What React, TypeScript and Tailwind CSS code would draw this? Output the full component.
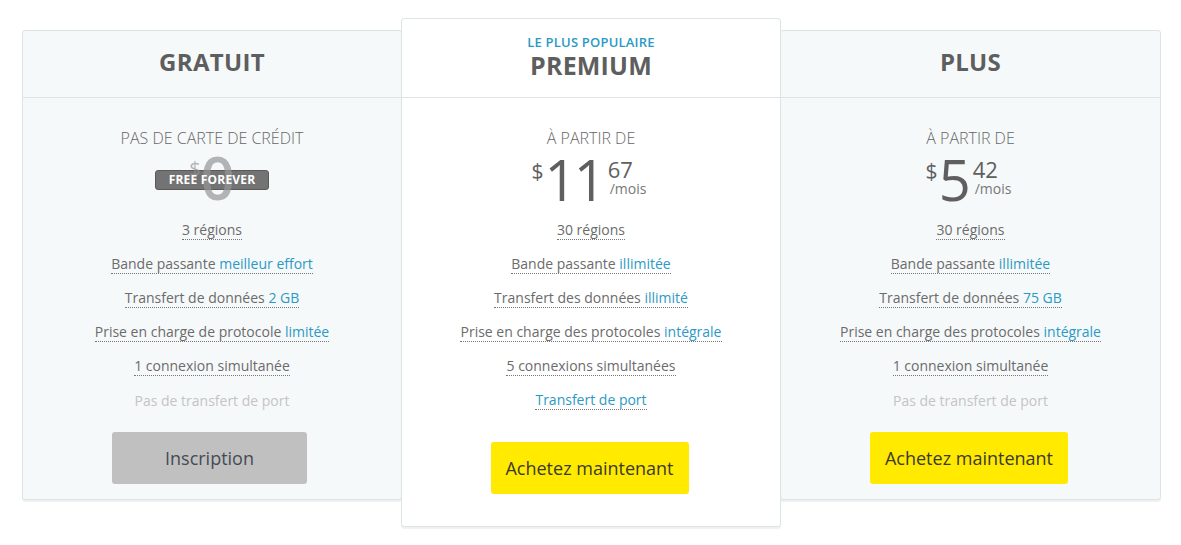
import React from "react";

type Feature = { text: string; hi?: string; muted?: boolean; allBlue?: boolean };

const BLUE = "text-[#2a9ac4]";

function FeatureRow({ f }: { f: Feature }) {
  if (f.muted) {
    return (
      <div className="h-[34px] flex items-center justify-center">
        <span className="text-[14px] text-[#c4c4c4]">{f.text}</span>
      </div>
    );
  }
  return (
    <div className="h-[34px] flex items-center justify-center">
      <span className="text-[14px] text-[#6b6b6b] leading-[19px] border-b border-dotted border-[#777]">
        {f.allBlue ? <span className={BLUE}>{f.text}</span> : f.text}
        {f.hi && <span className={BLUE}> {f.hi}</span>}
      </span>
    </div>
  );
}

function Price({ whole, cents }: { whole: string; cents: string }) {
  return (
    <div className="flex justify-center h-[63px] pt-[6px] pr-[4px]">
      <div className="flex items-start text-[#5f5f5f]">
        <span className="text-[21px] leading-none mt-[5px] mr-[1px]">$</span>
        <span className="text-[56px] leading-[46px] font-normal tracking-[-3px]">{whole}</span>
        <div className="flex flex-col items-start ml-[5px] mt-[1px]">
          <span className="text-[22px] leading-[24px]">{cents}</span>
          <span className="text-[14px] leading-[16px] text-[#777] ml-[2px]">/mois</span>
        </div>
      </div>
    </div>
  );
}

function FreePrice() {
  return (
    <div className="flex justify-center h-[63px] pt-[1px]">
      <div className="relative w-[114px] h-[52px] flex justify-center">
        <div className="absolute left-0 top-[19px] w-[114px] h-[20px] rounded-[3px] bg-[#737373] border border-[#5a5a5a]" />
        <div className="relative z-10 flex items-start text-[rgba(150,150,150,0.7)]">
          <span className="text-[20px] leading-none mt-[8px]">$</span>
          <span className="text-[60px] leading-[52px] font-semibold">0</span>
        </div>
        <div className="absolute left-0 top-[19px] z-20 w-[114px] h-[20px] flex items-center justify-center text-white text-[12px] font-bold tracking-[0.2px]">
          FREE FOREVER
        </div>
      </div>
    </div>
  );
}

const free: Feature[] = [
  { text: "3 régions" },
  { text: "Bande passante", hi: "meilleur effort" },
  { text: "Transfert de données", hi: "2 GB" },
  { text: "Prise en charge de protocole", hi: "limitée" },
  { text: "1 connexion simultanée" },
  { text: "Pas de transfert de port", muted: true },
];

const premium: Feature[] = [
  { text: "30 régions" },
  { text: "Bande passante", hi: "illimitée" },
  { text: "Transfert des données", hi: "illimité" },
  { text: "Prise en charge des protocoles", hi: "intégrale" },
  { text: "5 connexions simultanées" },
  { text: "Transfert de port", allBlue: true },
];

const plus: Feature[] = [
  { text: "30 régions" },
  { text: "Bande passante", hi: "illimitée" },
  { text: "Transfert de données", hi: "75 GB" },
  { text: "Prise en charge des protocoles", hi: "intégrale" },
  { text: "1 connexion simultanée" },
  { text: "Pas de transfert de port", muted: true },
];

function App() {
  return (
    <div
      className="w-[1181px] h-[545px] bg-white flex items-start pl-[22px]"
      style={{ fontFamily: '"Open Sans", "Noto Sans", sans-serif' }}
    >
      {/* Gratuit */}
      <div className="mt-[30px] w-[380px] bg-[#f6f9fa] border border-[#dce4e6] rounded-[3px] shadow-[0_2px_1px_rgba(0,0,0,0.06)]">
        <div className="h-[67px] flex items-center justify-center border-b border-[#dce4e6] pb-[5px]">
          <h2 className="text-[24px] font-bold text-[#5e5e5e] tracking-[0.3px]">GRATUIT</h2>
        </div>
        <div className="pt-[28px] pb-[15px] flex flex-col">
          <div className="text-center text-[16px] leading-[24px] text-[#666] font-light">PAS DE CARTE DE CRÉDIT</div>
          <FreePrice />
          {free.map((f) => <FeatureRow key={f.text} f={f} />)}
          <div className="flex justify-center mt-[15px] pr-[5px]">
            <button className="w-[195px] h-[52px] rounded-[3px] bg-[#c0c0c0] text-[#444c55] text-[18px]">Inscription</button>
          </div>
        </div>
      </div>

      {/* Premium */}
      <div className="relative z-10 -ml-[1px] mt-[18px] w-[380px] bg-white border border-[#dce4e6] rounded-[3px] shadow-[0_2px_1px_rgba(0,0,0,0.06)]">
        <div className="h-[79px] flex flex-col items-center justify-center border-b border-[#dce4e6] pb-[2px]">
          <div className="text-[13px] font-semibold text-[#2a9ac4] leading-[16px] tracking-[0.2px]">LE PLUS POPULAIRE</div>
          <h2 className="text-[25px] font-bold text-[#5e5e5e] leading-[30px] tracking-[0.2px]">PREMIUM</h2>
        </div>
        <div className="pt-[28px] pb-[32px] flex flex-col">
          <div className="text-center text-[16px] leading-[24px] text-[#666] font-light">À PARTIR DE</div>
          <Price whole="11" cents="67" />
          {premium.map((f) => <FeatureRow key={f.text} f={f} />)}
          <div className="flex justify-center mt-[25px] pr-[3px]">
            <button className="w-[198px] h-[52px] rounded-[3px] bg-[#ffea00] text-[#3b3b2b] text-[18px]">Achetez maintenant</button>
          </div>
        </div>
      </div>

      {/* Plus */}
      <div className="-ml-[1px] mt-[30px] w-[381px] bg-[#f6f9fa] border border-[#dce4e6] rounded-[3px] shadow-[0_2px_1px_rgba(0,0,0,0.06)]">
        <div className="h-[67px] flex items-center justify-center border-b border-[#dce4e6] pb-[5px]">
          <h2 className="text-[24px] font-bold text-[#5e5e5e] tracking-[0.3px]">PLUS</h2>
        </div>
        <div className="pt-[28px] pb-[15px] flex flex-col">
          <div className="text-center text-[16px] leading-[24px] text-[#666] font-light">À PARTIR DE</div>
          <Price whole="5" cents="42" />
          {plus.map((f) => <FeatureRow key={f.text} f={f} />)}
          <div className="flex justify-center mt-[15px] pr-[3px]">
            <button className="w-[198px] h-[52px] rounded-[3px] bg-[#ffea00] text-[#3b3b2b] text-[18px]">Achetez maintenant</button>
          </div>
        </div>
      </div>
    </div>
  );
}

export default App;
